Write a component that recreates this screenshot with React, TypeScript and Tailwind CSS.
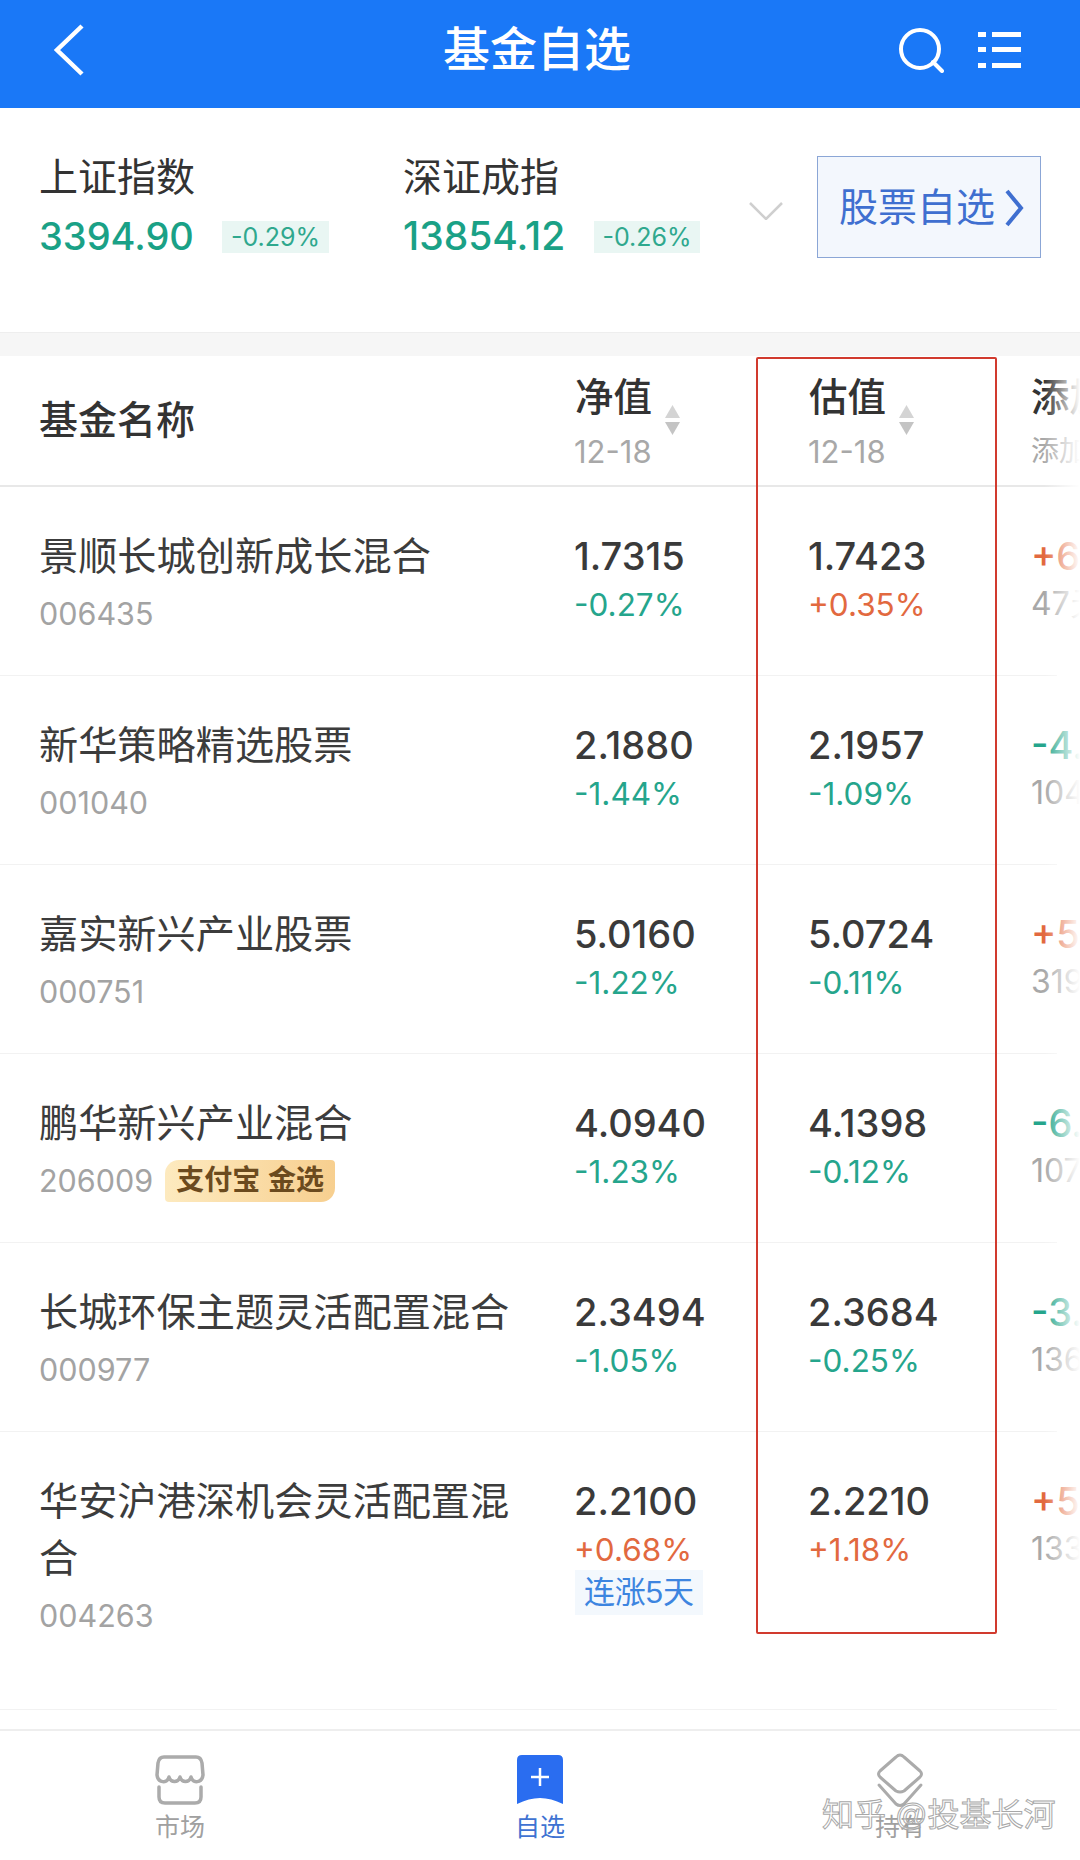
const funds = [
  { name: "景顺长城创新成长混合", code: "006435", nav: "1.7315", navPct: "-0.27%", est: "1.7423", estPct: "+0.35%", add: "+6", days: "47天" },
  { name: "新华策略精选股票", code: "001040", nav: "2.1880", navPct: "-1.44%", est: "2.1957", estPct: "-1.09%", add: "-4.", days: "104" },
  { name: "嘉实新兴产业股票", code: "000751", nav: "5.0160", navPct: "-1.22%", est: "5.0724", estPct: "-0.11%", add: "+5", days: "319" },
  { name: "鹏华新兴产业混合", code: "206009", nav: "4.0940", navPct: "-1.23%", est: "4.1398", estPct: "-0.12%", add: "-6.", days: "107", gold: true },
  { name: "长城环保主题灵活配置混合", code: "000977", nav: "2.3494", navPct: "-1.05%", est: "2.3684", estPct: "-0.25%", add: "-3.", days: "136" },
  { name: "华安沪港深机会灵活配置混合", code: "004263", nav: "2.2100", navPct: "+0.68%", est: "2.2210", estPct: "+1.18%", add: "+5", days: "133", streak: "连涨5天" },
];

const pctColor = (v: string) => (v.startsWith("+") ? "text-[#e2693f]" : "text-[#25a58c]");

const SortIcon = () => (
  <svg width="17" height="30" viewBox="0 0 17 30" className="mt-[36px] ml-[12px]">
    <path d="M8.5 0 L16 13 H1 Z" fill="#d4d4d4" />
    <path d="M1 17 H16 L8.5 30 Z" fill="#c4c4c4" />
  </svg>
);

const HeaderCol = ({ title, width }: { title: string; width: string }) => (
  <div className={`${width} shrink-0 pt-[13px]`}>
    <div className="flex">
      <div>
        <div className="text-[38.5px] leading-[58px] font-medium text-[#333]">{title}</div>
        <div className="text-[31px] leading-[44px] text-[#a8a8a8] mt-[3px] ml-[-1px] font-['Inter',sans-serif]">12-18</div>
      </div>
      <SortIcon />
    </div>
  </div>
);

const ValueCol = ({ value, pct, width, streak }: { value: string; pct: string; width: string; streak?: string }) => (
  <div className={`${width} shrink-0 pt-[45px]`}>
    <div className="text-[38px] leading-[48px] ml-[-1px] font-medium text-[#3a3a3a] font-['Inter',sans-serif]">{value}</div>
    <div className={`text-[31.5px] leading-[48px] ml-[-1px] mt-[1px] font-['Inter',sans-serif] ${pctColor(pct)}`}>{pct}</div>
    {streak && (
      <div className="w-[128px] h-[45px] mt-[-4px] bg-[#f3f8fd] text-[#3d85e0] text-[31px] leading-[45px] text-center">{streak}</div>
    )}
  </div>
);

export default function App() {
  return (
    <div className="w-[1080px] h-[1860px] overflow-hidden bg-white flex flex-col font-['Liberation_Sans','Noto_Sans_CJK_SC',sans-serif]">
      {/* top bar */}
      <div className="h-[108px] shrink-0 bg-[#1a78f7] flex items-center justify-between pl-[52px] pr-[59px] pb-[8px]">
        <svg width="34" height="52" viewBox="0 0 34 52" fill="none" stroke="white" strokeWidth="4.5">
          <path d="M30 2 L5 26 L30 50" />
        </svg>
        <div className="text-[47px] font-medium text-white ml-[90px]">基金自选</div>
        <div className="flex items-center gap-[34px]">
          <svg width="46" height="46" viewBox="0 0 46 46" fill="none" stroke="white" strokeWidth="4">
            <circle cx="22" cy="22" r="19" />
            <path d="M35 35 L44 44" strokeLinecap="round" />
          </svg>
          <svg width="43" height="38" viewBox="0 0 43 38" fill="white">
            <rect x="0" y="1" width="8" height="5" />
            <rect x="14" y="1" width="29" height="5" />
            <rect x="0" y="16" width="8" height="5" />
            <rect x="14" y="16" width="29" height="5" />
            <rect x="0" y="32" width="8" height="5" />
            <rect x="14" y="32" width="29" height="5" />
          </svg>
        </div>
      </div>

      {/* index summary */}
      <div className="h-[224px] shrink-0 flex pl-[39px]">
        <div className="w-[364px] shrink-0 pt-[47px]">
          <div className="text-[39px] leading-[46px] text-[#333]">上证指数</div>
          <div className="flex items-center mt-[11px]">
            <div className="w-[183px] text-[38px] leading-[48px] font-medium text-[#1aa186] font-['Inter',sans-serif]">3394.90</div>
            <div className="w-[107px] h-[32px] mt-[2px] bg-[#e9f6f3] text-[25px] leading-[32px] text-center text-[#2fa88e] font-['Inter',sans-serif]">-0.29%</div>
          </div>
        </div>
        <div className="w-[346px] shrink-0 pt-[47px]">
          <div className="text-[39px] leading-[46px] text-[#333]">深证成指</div>
          <div className="flex items-center mt-[11px]">
            <div className="w-[191px] text-[39px] leading-[48px] font-medium text-[#1aa186] font-['Inter',sans-serif]">13854.12</div>
            <div className="w-[106px] h-[32px] mt-[2px] bg-[#e9f6f3] text-[25px] leading-[32px] text-center text-[#2fa88e] font-['Inter',sans-serif]">-0.26%</div>
          </div>
        </div>
        <svg width="34" height="18" viewBox="0 0 34 18" fill="none" stroke="#cfcfcf" strokeWidth="2.5" className="mt-[94px]">
          <path d="M1 1 L17 17 L33 1" />
        </svg>
        <div className="ml-[34px] mt-[48px] w-[224px] h-[102px] border border-[#8ba6d6] bg-[#f3f7fd] flex items-center pl-[21px] pt-[2px] gap-[9px] text-[#3f6fd0] text-[39px]">
          <span>股票自选</span>
          <svg width="20" height="38" viewBox="0 0 20 38" fill="none" stroke="#3f6fd0" strokeWidth="4">
            <path d="M3 2 L17 19 L3 36" />
          </svg>
        </div>
      </div>

      <div className="h-[24px] shrink-0 bg-[#f6f6f6] border-t border-[#eeeeee]" />

      {/* fund table */}
      <div className="relative flex-1 overflow-hidden">
        <div className="h-[131px] flex border-b-2 border-[#e8e8e8]">
          <div className="w-[575px] shrink-0 pl-[39px] pt-[40px] text-[39px] leading-[50px] font-medium text-[#333]">基金名称</div>
          <HeaderCol title="净值" width="w-[234px]" />
          <HeaderCol title="估值" width="w-[222px]" />
          <div className="flex-1 overflow-hidden whitespace-nowrap pt-[13px]">
            <div className="text-[38.5px] leading-[58px] font-medium text-[#333]">添加</div>
            <div className="text-[28px] leading-[44px] text-[#a8a8a8] mt-[3px]">添加</div>
          </div>
        </div>

        {funds.map((f) => (
          <div key={f.code}>
            <div className={`flex ${f.streak ? "h-[277px]" : "h-[188px]"}`}>
              <div className="w-[575px] shrink-0 pl-[39px] pr-[60px] pt-[41px]">
                <div className="text-[39.2px] leading-[57px] text-[#3c3c3c]">{f.name}</div>
                <div className="flex items-center mt-[5px] h-[48px]">
                  <span className="text-[30.5px] text-[#a3a3a3] font-['Inter',sans-serif]">{f.code}</span>
                  {f.gold && (
                    <span className="ml-[12px] h-[42px] w-[170px] rounded-tl-[14px] rounded-br-[14px] rounded-tr-[4px] rounded-bl-[4px] bg-gradient-to-r from-[#fdeabf] to-[#f7cf8f] text-center text-[28px] leading-[42px] font-bold text-[#6b4a1e]">
                      支付宝 金选
                    </span>
                  )}
                </div>
              </div>
              <ValueCol value={f.nav} pct={f.navPct} width="w-[234px]" streak={f.streak} />
              <ValueCol value={f.est} pct={f.estPct} width="w-[222px]" />
              <div className="flex-1 overflow-hidden whitespace-nowrap pt-[45px]">
                <div className={`text-[38px] leading-[48px] font-medium font-['Inter',sans-serif] ${pctColor(f.add)}`}>{f.add}</div>
                <div className="text-[32px] leading-[48px] text-[#a8a8a8] font-['Inter',sans-serif]">{f.days}</div>
              </div>
            </div>
            <div className="h-px w-[1057px] bg-[#f2f2f2]" />
          </div>
        ))}

        {/* right edge fade */}
        <div className="absolute top-0 right-0 bottom-0 w-[36px] bg-gradient-to-r from-white/0 to-white" />
        {/* red annotation box */}
        <div className="absolute left-[756px] top-px w-[241px] h-[1277px] border-[2.5px] border-[#d13a2e] rounded-[2px]" />
      </div>

      {/* tab bar */}
      <div className="relative h-[131px] shrink-0 border-t-2 border-[#eeeeee] bg-white flex">
        <div className="flex-1 flex flex-col items-center pt-[24px]">
          <svg width="50" height="50" viewBox="0 0 50 50" fill="none" stroke="#ababab" strokeWidth="3.5" strokeLinecap="round" strokeLinejoin="round">
            <path d="M9 2 H41 Q46 2 47 8 L48 20 C47 28 38 29 36 22 C34 28 27 28 25 22 C23 28 16 28 14 22 C12 29 3 28 2 20 L3 8 Q4 2 9 2 Z" />
            <path d="M4 32 V42 Q4 48 10 48 H40 Q46 48 46 42 V32" />
          </svg>
          <div className="text-[25px] leading-[32px] text-[#a0a0a0] mt-[6px]">市场</div>
        </div>
        <div className="flex-1 flex flex-col items-center pt-[24px]">
          <svg width="46" height="50" viewBox="0 0 46 50">
            <path d="M5 0 H41 Q46 0 46 5 V49 Q34 43 23 43 Q12 43 0 49 V5 Q0 0 5 0 Z" fill="#2a6df0" />
            <path d="M23 13 V31 M14 22 H32" stroke="white" strokeWidth="2.5" />
          </svg>
          <div className="text-[25px] leading-[32px] text-[#3f73d2] mt-[6px]">自选</div>
        </div>
        <div className="flex-1 flex flex-col items-center pt-[22px]">
          <svg width="48" height="58" viewBox="0 0 48 58" fill="none" stroke="#ababab" strokeWidth="3" strokeLinejoin="round" strokeLinecap="round">
            <path d="M24 2 Q26 2 28 4 L44 18 Q47 21 44 24 L28 38 Q24 40 20 38 L4 24 Q1 21 4 18 L20 4 Q22 2 24 2 Z" />
            <path d="M3 32 L20 51 Q24 54 28 51 L45 32" />
          </svg>
          <div className="text-[25px] leading-[32px] text-[#a0a0a0]">持有</div>
        </div>
        {/* watermark */}
        <div className="absolute left-[822px] top-[64px] text-[32px] leading-[40px] whitespace-nowrap text-white/40 [-webkit-text-stroke:1px_#a8a8a8]">知乎 @投基长河</div>
      </div>
    </div>
  );
}
